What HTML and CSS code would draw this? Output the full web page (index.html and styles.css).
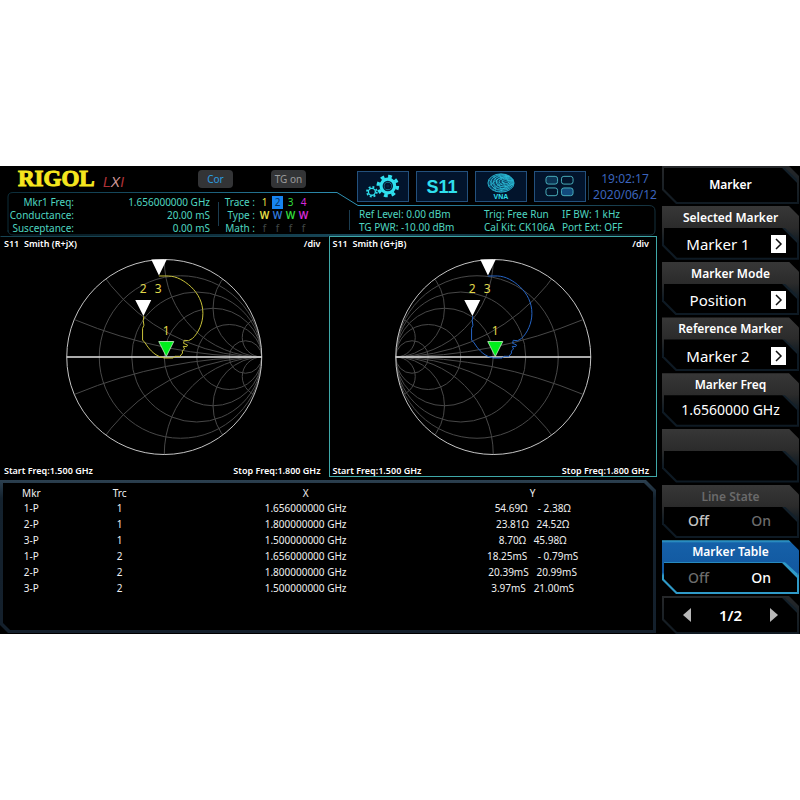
FILE: index.html
```
<!DOCTYPE html>
<html lang="en">
<head>
<meta charset="utf-8">
<meta name="viewport" content="width=device-width, initial-scale=1">
<title>Vector network analyzer</title>
<link rel="stylesheet" href="styles.css">
</head>
<body>
<svg class="defs" aria-hidden="true">
  <defs>
    <clipPath id="unit"><circle r="97.5"/></clipPath>
    <g id="smith" fill="none">
      <g clip-path="url(#unit)" stroke="#484848">
        <circle cx="16.25" r="81.25"/>
        <circle cx="32.5" r="65"/>
        <circle cx="48.75" r="48.75"/>
        <circle cx="65" r="32.5"/>
        <circle cx="81.25" r="16.25"/>
        <circle cx="97.5" cy="-487.5" r="487.5"/><circle cx="97.5" cy="487.5" r="487.5"/>
        <circle cx="97.5" cy="-195" r="195"/><circle cx="97.5" cy="195" r="195"/>
        <circle cx="97.5" cy="-97.5" r="97.5"/><circle cx="97.5" cy="97.5" r="97.5"/>
        <circle cx="97.5" cy="-48.75" r="48.75"/><circle cx="97.5" cy="48.75" r="48.75"/>
        <circle cx="97.5" cy="-19.5" r="19.5"/><circle cx="97.5" cy="19.5" r="19.5"/>
      </g>
      <circle r="97.5" stroke="#c4c4c4"/>
      <path d="M-97.5 0H97.5" stroke="#e4e4e4" stroke-width="1.3"/>
    </g>
    <path id="trace" fill="none" vector-effect="non-scaling-stroke" transform="translate(1 0) scale(.3333)" d="M296 78H325C350 79 372 92 392 110C414 131 428 158 428 190C428 220 414 250 396 266L385 272L372 271L370 280L382 285L379 290L369 289L373 297L366 303L367 309L359 319L345 319L338 324H312L296 319C280 312 265 296 255 279L247 270V235L251 226L249 212L251 198"/>
    <g id="markers">
      <path fill="#fff" d="M92 9.500h15.500L99.700 25.500zM76 50h16L84.200 66z"/>
      <path fill="#00f01c" stroke="#c8f5c8" stroke-width=".8" d="M99.500 91.500h15L107 106.500z"/>
      <g class="marker-label">
        <text x="84" y="43">2</text><text x="99" y="43">3</text><text x="107" y="85">1</text>
      </g>
    </g>
  </defs>
</svg>

<main class="screen">
  <section class="workspace">
    <header class="status">
      <svg class="status-frame" viewBox="0 0 657 70" preserveAspectRatio="none" aria-hidden="true">
        <defs><linearGradient id="edge"><stop offset="0" stop-color="#0c2c38"/><stop offset=".3" stop-color="#1c5d78"/><stop offset=".55" stop-color="#3096ba"/><stop offset="1" stop-color="#14303c"/></linearGradient></defs>
        <g fill="none">
          <path d="M8 66V31Q8 26.500 13 26.500H337L358 39.500H649Q655 39.500 655 45V64Q655 69 650 69H14Q8 69 8 64" stroke="url(#edge)"/>
          <path d="M218.500 36V60M349.500 44V64M588.500 10V34" stroke="#1b3c50"/>
        </g>
      </svg>
      <div class="status-left">
        <div class="brand">
          <span class="rigol">RIGOL</span>
          <span class="lxi">L<b>X</b>I</span>
          <span class="chip chip-cor">Cor</span>
          <span class="chip">TG on</span>
        </div>
        <div class="readouts">
          <dl class="readout">
            <dt>Mkr1 Freq:</dt><dd>1.656000000 GHz</dd>
            <dt>Conductance:</dt><dd>20.00 mS</dd>
            <dt>Susceptance:</dt><dd>0.00 mS</dd>
          </dl>
          <div class="traces">
            <span class="name">Trace :</span><span class="t1">1</span><span class="t2 active">2</span><span class="t3">3</span><span class="t4">4</span>
            <span class="name">Type :</span><b class="t1">W</b><b class="t2">W</b><b class="t3">W</b><b class="t4">W</b>
            <span class="name">Math :</span><span class="off">f</span><span class="off">f</span><span class="off">f</span><span class="off">f</span>
          </div>
        </div>
      </div>
      <div class="status-right">
        <div class="toolbar">
          <button class="tool" type="button" aria-label="Settings">
            <svg width="50" height="30" viewBox="0 0 50 30" fill="none" stroke="#2fe0ee">
              <circle cx="30" cy="14.500" r="6.200" stroke-width="5"/>
              <circle cx="30" cy="14.500" r="10" stroke-width="3.400" stroke-dasharray="3.900 3.954"/>
              <circle cx="30" cy="14.500" r="4.600" stroke="#062240" stroke-width="1.600"/>
              <circle cx="30" cy="14.500" r="1.600" fill="#062240" stroke="none"/>
              <circle cx="13.500" cy="20.500" r="3.600" stroke-width="1.400"/>
              <circle cx="13.500" cy="20.500" r="5.100" stroke-width="1.800" stroke-dasharray="2 2.005"/>
            </svg>
          </button>
          <button class="tool tool-s11" type="button">S11</button>
          <button class="tool tool-vna" type="button">
            <svg width="28" height="20" viewBox="0 0 30 21" fill="none" stroke="#2cc6e0" stroke-width=".9">
              <ellipse cx="15" cy="10.500" rx="14" ry="9.800" fill="#0c4668"/>
              <ellipse cx="16" cy="10" rx="12" ry="8.300"/>
              <ellipse cx="17" cy="9.700" rx="10" ry="6.800"/>
              <ellipse cx="18" cy="9.400" rx="8" ry="5.200"/>
              <ellipse cx="19" cy="9.200" rx="6" ry="3.700"/>
              <ellipse cx="20" cy="9" rx="3.800" ry="2.100"/>
              <path stroke-width=".6" d="M2 7Q10 14 9 19M7 3Q14 13 16 20M13 1Q18 12 22 18M20 2Q22 10 27 15M2 14Q12 4 24 3M6 18Q14 9 28 7M13 20Q19 14 29 11"/>
            </svg>
            <span>VNA</span>
          </button>
          <button class="tool" type="button" aria-label="Window layout">
            <svg width="50" height="30" viewBox="0 0 50 30" stroke="#4bb0bd" fill="none">
              <rect x="10.500" y="4.500" width="12" height="8" rx="2.500" fill="#0b3454"/>
              <rect x="26.500" y="4.500" width="12" height="8" rx="2.500"/>
              <rect x="10.500" y="16.500" width="12" height="8" rx="2.500"/>
              <rect x="26.500" y="16.500" width="12" height="8" rx="2.500" fill="#124a7c"/>
            </svg>
          </button>
          <time class="clock" datetime="2020-06-12T19:02:17"><span>19:02:17</span><span>2020/06/12</span></time>
        </div>
        <div class="settings">
          <p>Ref Level: 0.00 dBm<br>TG PWR: -10.00 dBm</p>
          <p>Trig: Free Run<br>Cal Kit: CK106A</p>
          <p>IF BW: 1 kHz<br>Port Ext: OFF</p>
        </div>
      </div>
    </header>

    <div class="plots">
      <figure class="plot">
        <figcaption class="plot-row"><span>S11  Smith (R+jX)</span><span>/div</span></figcaption>
        <svg class="chart" viewBox="0 0 210 216" role="img" aria-label="Impedance Smith chart">
          <use href="#smith" transform="translate(105 107)"/>
          <use href="#trace" stroke="#c9c23a"/>
          <use href="#markers"/>
        </svg>
        <div class="plot-row plot-foot"><span>Start Freq:1.500 GHz</span><span>Stop Freq:1.800 GHz</span></div>
      </figure>
      <figure class="plot selected">
        <figcaption class="plot-row"><span>S11  Smith (G+jB)</span><span>/div</span></figcaption>
        <svg class="chart" viewBox="0 0 210 216" role="img" aria-label="Admittance Smith chart">
          <use href="#smith" transform="translate(105 107) scale(-1 1)"/>
          <use href="#trace" stroke="#2564c4"/>
          <use href="#markers"/>
        </svg>
        <div class="plot-row plot-foot"><span>Start Freq:1.500 GHz</span><span>Stop Freq:1.800 GHz</span></div>
      </figure>
    </div>

    <section class="marker-panel">
      <div class="marker-inner">
        <table>
          <colgroup><col class="c-mkr"><col class="c-trc"><col class="c-x"><col class="c-y"></colgroup>
          <thead><tr><th>Mkr</th><th>Trc</th><th>X</th><th>Y</th></tr></thead>
          <tbody>
            <tr><td>1-P</td><td>1</td><td>1.656000000 GHz</td><td>54.69Ω    - 2.38Ω</td></tr>
            <tr><td>2-P</td><td>1</td><td>1.800000000 GHz</td><td>23.81Ω   24.52Ω</td></tr>
            <tr><td>3-P</td><td>1</td><td>1.500000000 GHz</td><td>8.70Ω   45.98Ω</td></tr>
            <tr><td>1-P</td><td>2</td><td>1.656000000 GHz</td><td>18.25mS    - 0.79mS</td></tr>
            <tr><td>2-P</td><td>2</td><td>1.800000000 GHz</td><td>20.39mS   20.99mS</td></tr>
            <tr><td>3-P</td><td>2</td><td>1.500000000 GHz</td><td>3.97mS   21.00mS</td></tr>
          </tbody>
        </table>
      </div>
    </section>
  </section>

  <nav class="softkeys" aria-label="Marker menu">
    <h1 class="key key-plain"><span class="face">Marker</span></h1>
    <button class="key" type="button">
      <span class="key-title">Selected Marker</span>
      <span class="face pick"><span class="value">Marker 1</span><svg class="more" viewBox="0 0 15 18"><path d="M5 4L10 9L5 14"/></svg></span>
    </button>
    <button class="key" type="button">
      <span class="key-title">Marker Mode</span>
      <span class="face pick"><span class="value">Position</span><svg class="more" viewBox="0 0 15 18"><path d="M5 4L10 9L5 14"/></svg></span>
    </button>
    <button class="key" type="button">
      <span class="key-title">Reference Marker</span>
      <span class="face pick"><span class="value">Marker 2</span><svg class="more" viewBox="0 0 15 18"><path d="M5 4L10 9L5 14"/></svg></span>
    </button>
    <button class="key" type="button">
      <span class="key-title">Marker Freq</span>
      <span class="face freq">1.6560000 GHz</span>
    </button>
    <button class="key" type="button" aria-label="Unassigned" disabled>
      <span class="key-title"></span>
      <span class="face"></span>
    </button>
    <button class="key key-dim" type="button">
      <span class="key-title">Line State</span>
      <span class="face toggle"><span class="soft">Off</span><span class="unset">On</span></span>
    </button>
    <button class="key key-active" type="button">
      <span class="key-title">Marker Table</span>
      <span class="face toggle"><span class="unset">Off</span><span class="set">On</span></span>
    </button>
    <div class="key key-plain">
      <div class="face pager">
        <button type="button" aria-label="Previous page"><svg viewBox="0 0 8 14"><path d="M8 0V14L0 7z"/></svg></button>
        <span>1/2</span>
        <button type="button" aria-label="Next page"><svg viewBox="0 0 8 14"><path d="M0 0V14L8 7z"/></svg></button>
      </div>
    </div>
  </nav>
</main>
</body>
</html>
```
FILE: styles.css
```
* { box-sizing: border-box; }

body {
  margin: 0;
  min-height: 100vh;
  display: flex;
  align-items: center;
  background: #fff;
  font-family: "Noto Sans", "Open Sans", sans-serif;
  font-size: 10px;
  line-height: 13px;
}

button {
  font: inherit;
  color: inherit;
  border: 0;
  padding: 0;
  background: none;
}

dl, dd, p, figure, h1 { margin: 0; }
.defs { position: absolute; width: 0; height: 0; }

.screen {
  flex: 1;
  display: grid;
  grid-template-columns: minmax(0, 1fr) 143px;
  background: #000;
  color: #f0f0f0;
}

.workspace {
  display: flex;
  flex-direction: column;
  min-width: 0;
}

/* Status area */
.status {
  position: relative;
  display: grid;
  grid-template-columns: 357fr 300fr;
  height: 70px;
  color: #4fd6c0;
}

.status-frame {
  position: absolute;
  inset: 0;
  width: 100%;
  height: 100%;
}

.status-left, .status-right { position: relative; }

.brand {
  display: flex;
  align-items: center;
  height: 26px;
  padding-left: 18px;
}

.rigol {
  width: 85px;
  color: #f5e61e;
  font: bold 23px/26px "Liberation Serif", serif;
  -webkit-text-stroke: 1px #f5e61e;
}

.lxi {
  width: 95px;
  padding-top: 6px;
  color: #b03238;
  font: italic 14px/16px "Liberation Sans", sans-serif;
}

.lxi b { color: #d49a98; font-weight: normal; }

.chip {
  width: 35px;
  height: 18px;
  margin-right: 38px;
  border-radius: 4px;
  background: #333436;
  color: #9a9a9a;
  line-height: 18px;
  text-align: center;
}

.chip-cor { color: #2b9de0; }

.readouts {
  display: flex;
  padding-top: 4px;
}

.readout {
  display: grid;
  grid-template-columns: 74px 136px;
  grid-auto-rows: 13px;
  text-align: right;
}

.traces {
  display: grid;
  grid-template-columns: 48px repeat(4, 13px);
  grid-auto-rows: 13px;
  text-align: center;
}

.traces .name { padding-right: 3px; text-align: right; }
.t1 { color: #e8e04a; }
.t2 { color: #2f78d8; }
.t3 { color: #32dc3c; }
.t4 { color: #d62ad6; }
.off { color: #404848; }
.traces .active { background: #1784f0; color: #06305e; }
.traces b { font-weight: 600; }

.traces span:not(.name), .traces b { margin: 0 1px; }

.toolbar {
  display: flex;
  gap: 7px;
  height: 42px;
  padding-top: 5px;
}

.tool {
  flex: 0 0 52px;
  height: 31px;
  border: 1px solid #23507c;
  background: #02142c;
  color: #2fe0ee;
  display: flex;
  flex-direction: column;
  align-items: center;
  justify-content: center;
}

.tool-s11 { font: bold 18px/30px "Liberation Sans", sans-serif; }
.tool-vna span { font: bold 7px/8px "Liberation Sans", sans-serif; }

.clock {
  flex: 1;
  display: grid;
  grid-auto-rows: 16px;
  justify-items: center;
  color: #3b64bc;
  font-size: 12px;
  line-height: 16px;
  white-space: nowrap;
}

.settings {
  display: grid;
  grid-template-columns: 125px 78px auto;
  padding-left: 2px;
  white-space: nowrap;
}

/* Smith charts */
.plots {
  display: grid;
  grid-template-columns: 1fr 1fr;
}

.plot {
  display: flex;
  flex-direction: column;
  border: 1px solid #000;
  border-top-color: #174453;
}

.plot.selected { border-color: #3fa8a8; }

.plot-row {
  display: flex;
  justify-content: space-between;
  padding: 0 7px 0 3px;
  font-size: 9px;
  font-weight: 600;
  line-height: 13px;
  white-space: pre;
  color: #fff;
}

.plot-foot { line-height: 10px; }

.chart { width: 100%; height: 216px; }

.marker-label {
  fill: #e0d84a;
  font-size: 12px;
  text-anchor: middle;
}

/* Marker table */
.marker-panel {
  flex: 1;
  margin: 3px 1px 1px 0;
  padding: 3px;
  background: linear-gradient(#2c4050, #14222e 12%, #14202c);
  clip-path: polygon(0 0, calc(100% - 10px) 0, 100% 10px, 100% 100%, 8px 100%, 0 calc(100% - 8px));
}

.marker-inner {
  height: 100%;
  padding-top: 4px;
  background: #000;
  clip-path: polygon(0 0, calc(100% - 9px) 0, 100% 9px, 100% 100%, 7px 100%, 0 calc(100% - 7px));
}

table {
  height: 110px;
  border-collapse: collapse;
  table-layout: fixed;
  width: 97%;
  text-align: center;
  white-space: pre;
}

th, td { padding: 0; font-weight: normal; }
.c-mkr { width: 9%; }
.c-trc { width: 19%; }
.c-x { width: 40%; }
.c-y { width: 32%; }

/* Soft keys */
.softkeys {
  display: grid;
  grid-template-rows: 38px repeat(7, 1fr) 38px;
  gap: 2px;
  height: 468px;
  padding: 0 1px 0 5px;
}

.key {
  display: flex;
  flex-direction: column;
  padding: 0 2px 2px;
  background: linear-gradient(#373737, #2b2b2b 40%, #1c2226 55%, #0e1a24 70%);
  clip-path: polygon(0 0, calc(100% - 10px) 0, 100% 10px, 100% 100%, 14px 100%, 0 calc(100% - 14px));
  color: #fff;
  text-align: center;
}

.key-title {
  height: 22px;
  font-size: 12px;
  font-weight: 600;
  line-height: 23px;
}

.face {
  flex: 1;
  display: flex;
  align-items: center;
  justify-content: center;
  background: linear-gradient(225deg, #13202a 10px, #000 11px);
  clip-path: polygon(0 0, calc(100% - 12px) 0, 100% 11px, 100% 100%, 13px 100%, 0 calc(100% - 13px));
  font-size: 15px;
  line-height: 20px;
}

.key-plain {
  padding: 2px;
  background: linear-gradient(#26282a, #101a22);
}

h1 .face { font-size: 12px; font-weight: 600; }
.pick { padding: 3px 11px 0 11px; }
.value { flex: 1; padding-right: 10px; }
.freq { font-size: 14px; }

.more { width: 15px; height: 18px; background: #fff; fill: none; stroke: #111; stroke-width: 1.5; }

.key-dim .key-title { color: #6a6a6a; }
.toggle { justify-content: space-between; padding: 0 26px 0 24px; font-size: 14px; font-weight: 500; }
.unset { color: #6c6c6c; }
.soft { color: #c4c4c4; }

.key-active { background: linear-gradient(#2f9ac8 1px, #1560a8 3px, #1258a0 60%, #2f9ac8 66%); }
.key-active .face { background: linear-gradient(225deg, #2f9ac8 10px, #000 11px); border-top: 1px solid #2f9ac8; }

.pager { justify-content: space-between; padding: 0 19px; font-size: 15px; font-weight: 600; }
.pager button { display: flex; }
.pager svg { width: 8px; height: 14px; fill: #b8b8b8; }
```
